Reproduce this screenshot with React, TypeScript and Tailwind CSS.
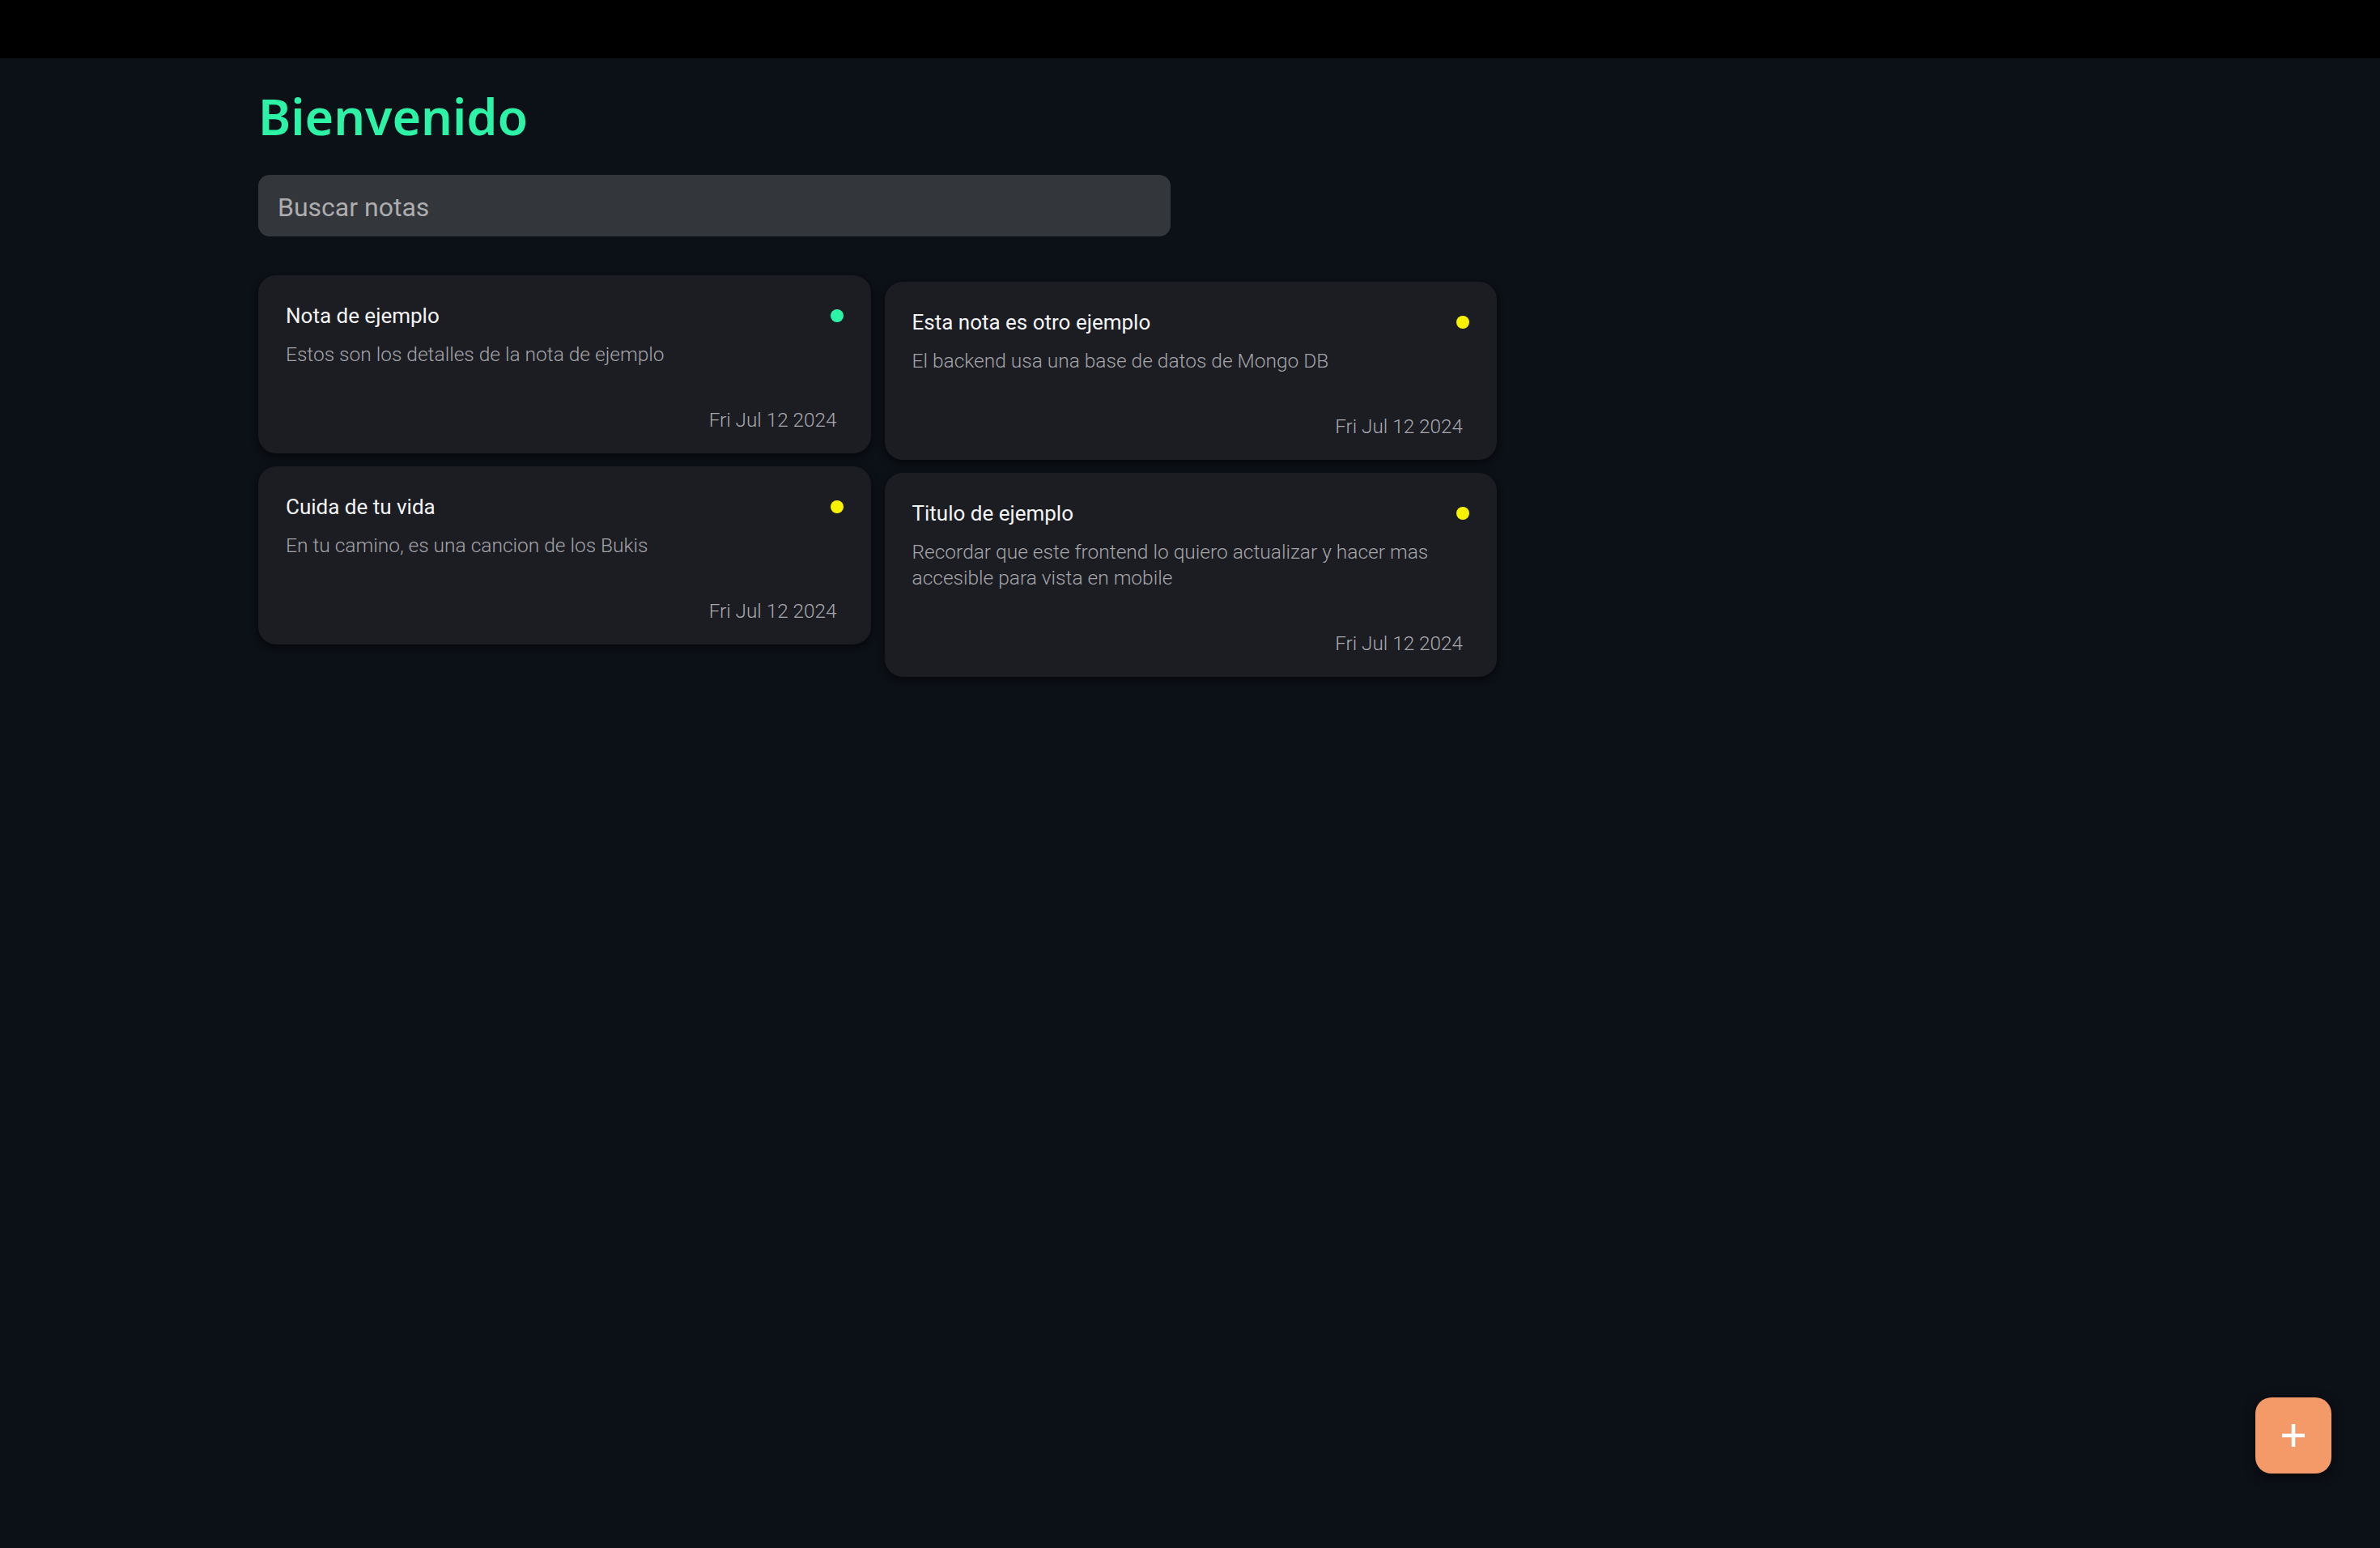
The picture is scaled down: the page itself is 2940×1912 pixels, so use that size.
import React from "react";

type Note = { title: string; desc: string; date: string; color: string };

const left: Note[] = [
  { title: "Nota de ejemplo", desc: "Estos son los detalles de la nota de ejemplo", date: "Fri Jul 12 2024", color: "bg-[#2cf3a6]" },
  { title: "Cuida de tu vida", desc: "En tu camino, es una cancion de los Bukis", date: "Fri Jul 12 2024", color: "bg-[#f7f300]" },
];
const right: Note[] = [
  { title: "Esta nota es otro ejemplo", desc: "El backend usa una base de datos de Mongo DB", date: "Fri Jul 12 2024", color: "bg-[#f7f300]" },
  { title: "Titulo de ejemplo", desc: "Recordar que este frontend lo quiero actualizar y hacer mas accesible para vista en mobile", date: "Fri Jul 12 2024", color: "bg-[#f7f300]" },
];

function Card({ n }: { n: Note }) {
  return (
    <div className="flex flex-col rounded-[22px] bg-[#1c1d23] pt-[32px] pl-[34px] pr-[34px] pb-[25px] shadow-[0_4px_8px_rgba(0,0,0,0.55)] font-['Roboto',sans-serif]">
      <div className="flex items-center justify-between">
        <span className="text-[26px] leading-[36px] text-[#f4f4f5]">{n.title}</span>
        <span className={`h-[16px] w-[16px] rounded-full ${n.color}`}></span>
      </div>
      <p className="mt-[14px] text-[24.5px] leading-[32px] font-light text-[#a3a3a8]">{n.desc}</p>
      <div className="mt-[49px] pr-[8px] text-right text-[24.3px] leading-[32px] font-light text-[#a8a8ad]">{n.date}</div>
    </div>
  );
}

export default function App() {
  return (
    <div className="min-h-screen bg-[#0c1017]">
      <div className="h-[72px] bg-black"></div>
      <main className="pl-[319px] pt-[36px]">
        <h1 className="text-[61px] leading-[72px] font-semibold text-[#2cf3a6] font-['Noto_Sans',sans-serif]">Bienvenido</h1>
        <input
          type="text"
          placeholder="Buscar notas"
          className="mt-[36px] block h-[76px] w-[1127px] rounded-[14px] bg-[#33363b] px-[24px] pt-[3px] text-[32px] text-white placeholder:text-[#adadb0] outline-none font-['Roboto',sans-serif]"
        />
        <div className="mt-[48px] flex w-[1530px] gap-[17px]">
          <div className="flex flex-1 flex-col gap-[16px]">
            {left.map((n) => (
              <Card key={n.title} n={n} />
            ))}
          </div>
          <div className="mt-[8px] flex flex-1 flex-col gap-[16px]">
            {right.map((n) => (
              <Card key={n.title} n={n} />
            ))}
          </div>
        </div>
      </main>
      <button className="fixed bottom-[92px] right-[60px] flex h-[94px] w-[94px] items-center justify-center rounded-[20px] bg-[#f49a68] shadow-[0_4px_14px_rgba(0,0,0,0.6)]">
        <svg width="30" height="30" viewBox="0 0 30 30">
          <path d="M15 1v28M1 15h28" stroke="white" strokeWidth="4.5" />
        </svg>
      </button>
    </div>
  );
}
